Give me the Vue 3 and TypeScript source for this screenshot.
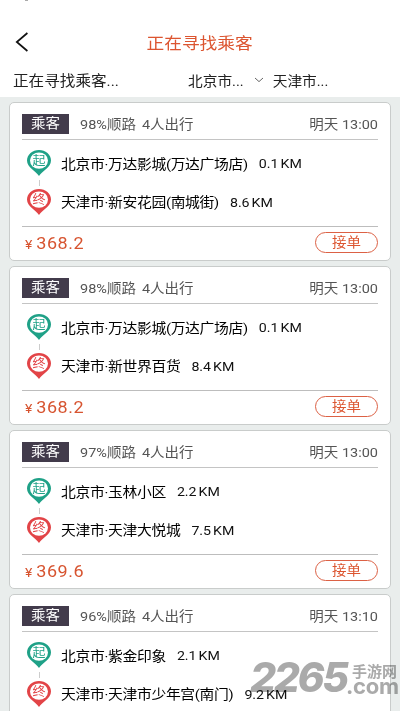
<script setup lang="ts">
interface Stop {
  name: string
  distance: string
}
interface Ride {
  match: string
  people: string
  time: string
  from: Stop
  to: Stop
  price: string
}

const rides: Ride[] = [
  {
    match: '98%顺路', people: '4人出行', time: '13:00', price: '368.2',
    from: { name: '北京市·万达影城(万达广场店)', distance: '0.1' },
    to: { name: '天津市·新安花园(南城街)', distance: '8.6' },
  },
  {
    match: '98%顺路', people: '4人出行', time: '13:00', price: '368.2',
    from: { name: '北京市·万达影城(万达广场店)', distance: '0.1' },
    to: { name: '天津市·新世界百货', distance: '8.4' },
  },
  {
    match: '97%顺路', people: '4人出行', time: '13:00', price: '369.6',
    from: { name: '北京市·玉林小区', distance: '2.2' },
    to: { name: '天津市·天津大悦城', distance: '7.5' },
  },
  {
    match: '96%顺路', people: '4人出行', time: '13:10', price: '369.6',
    from: { name: '北京市·紫金印象', distance: '2.1' },
    to: { name: '天津市·天津市少年宫(南门)', distance: '9.2' },
  },
]
</script>

<template>
  <div class="screen">
    <span class="notch"></span>
    <header class="nav">
      <svg class="back" width="14" height="20" viewBox="0 0 14 20">
        <path d="M12.4 1 L1.8 10 L12.4 19" fill="none" stroke="#111" stroke-width="1.7" />
      </svg>
      <h1 class="title flat">正在寻找乘客</h1>
    </header>
    <div class="filter">
      <span class="status flat">正在寻找乘客...</span>
      <span class="city flat">北京市...</span>
      <svg class="chev" width="10" height="6" viewBox="0 0 10 6">
        <path d="M1 1 L5 4.6 L9 1" fill="none" stroke="#555" stroke-width="0.9" />
      </svg>
      <span class="city flat">天津市...</span>
    </div>
    <main class="list">
      <article v-for="(r, i) in rides" :key="i" class="card">
        <div class="head">
          <span class="badge"><span class="flat">乘客</span></span>
          <span class="match flat">{{ r.match }}</span>
          <span class="people flat">{{ r.people }}</span>
          <span class="time flat">明天 {{ r.time }}</span>
        </div>
        <div class="route">
          <div class="pins">
            <span class="pin">
              <svg width="24" height="26" viewBox="0 0 24 26">
                <path d="M12 26 C9 21.5 0 17.5 0 10.6 A12 10.6 0 0 1 24 10.6 C24 17.5 15 21.5 12 26Z" fill="#1fa187" />
                <ellipse cx="12" cy="10.6" rx="9" ry="8.2" fill="#fff" />
              </svg>
              <span class="mark start">起</span>
            </span>
            <span class="link"></span>
            <span class="pin">
              <svg width="24" height="26" viewBox="0 0 24 26">
                <path d="M12 26 C9 21.5 0 17.5 0 10.6 A12 10.6 0 0 1 24 10.6 C24 17.5 15 21.5 12 26Z" fill="#e24447" />
                <ellipse cx="12" cy="10.6" rx="9" ry="8.2" fill="#fff" />
              </svg>
              <span class="mark end">终</span>
            </span>
          </div>
          <div class="stops">
            <div class="stop"><span class="place flat">{{ r.from.name }}</span><span class="dist flat">{{ r.from.distance }}<i>KM</i></span></div>
            <div class="stop"><span class="place flat">{{ r.to.name }}</span><span class="dist flat">{{ r.to.distance }}<i>KM</i></span></div>
          </div>
        </div>
        <div class="foot">
          <span class="price flat"><small>¥</small>{{ r.price }}</span>
          <button class="accept"><span class="flat">接单</span></button>
        </div>
      </article>
    </main>
    <div class="watermark">
      <span class="wm-num">2265</span>
      <span class="wm-side"><span class="wm-cn">手游网</span><span class="wm-com">.com</span></span>
    </div>
  </div>
</template>

<style>
body { margin: 0; overflow: hidden; }
</style>

<style scoped>
.screen {
  position: relative;
  width: 400px;
  height: 711px;
  overflow: hidden;
  background: #fff;
  font-family: Roboto, "Noto Sans CJK SC", sans-serif;
  color: #111;
  white-space: nowrap;
}
.flat { display: inline-block; transform: scaleY(0.92); }
.notch {
  position: absolute;
  left: 25px;
  top: 0;
  width: 3px;
  height: 1px;
  background: #aaa;
}
.nav {
  box-sizing: border-box;
  height: 66px;
  padding: 18px 0 0 15px;
  display: flex;
  align-items: center;
}
.title {
  margin: 1px 0 0 117.5px;
  font-size: 17.7px;
  line-height: 24px;
  font-weight: 400;
  color: #dc5530;
}
.filter {
  box-sizing: border-box;
  height: 31px;
  padding: 0 0 1px 13px;
  display: flex;
  align-items: center;
  font-size: 15.6px;
  line-height: 20px;
  color: #222;
}
.status { width: 175px; }
.city { font-size: 14.7px; }
.chev { margin: 0 9px 3px 10px; }
.list {
  height: 614px;
  box-sizing: border-box;
  padding: 5px 9px 0;
  background: #e9edec;
  display: flex;
  flex-direction: column;
  gap: 5px;
  overflow: hidden;
}
.card {
  box-sizing: border-box;
  flex: 0 0 159px;
  padding: 0 12px;
  background: #fff;
  border: 1px solid #c9cccb;
  border-radius: 5px;
}
.head {
  box-sizing: border-box;
  height: 37px;
  padding-top: 6px;
  border-bottom: 1px solid #c4c4c4;
  display: flex;
  align-items: center;
  font-size: 14.5px;
  color: #555;
}
.match, .people, .time { margin-bottom: 1px; }
.badge {
  width: 47px;
  height: 20px;
  margin-right: 11px;
  background: #423b4b;
  color: #fff;
  display: flex;
  align-items: center;
  justify-content: center;
  line-height: 20px;
}
.people { margin-left: 6px; }
.time { margin-left: auto; }
.route {
  box-sizing: border-box;
  height: 86px;
  display: flex;
  padding-left: 5px;
}
.pins {
  width: 24px;
  padding-top: 10px;
  display: flex;
  flex-direction: column;
  align-items: center;
}
.pin { position: relative; width: 24px; height: 26px; }
.pin svg { display: block; }
.mark {
  position: absolute;
  left: 0;
  top: 3px;
  width: 24px;
  text-align: center;
  font-size: 13px;
  line-height: 15px;
  transform: scaleY(0.92);
}
.start { color: #1fa187; }
.end { color: #e24447; }
.link { width: 1px; height: 6px; margin: 4px 0 3px; background: #ccc; }
.stops { padding: 4px 0 0 10px; }
.stop {
  height: 38.5px;
  display: flex;
  align-items: center;
  font-size: 14.8px;
  color: #000;
}
.place { letter-spacing: -0.32px; }
.dist { margin-left: 11px; font-size: 14.2px; color: #111; }
.dist i { font-style: normal; margin-left: 2px; }
.foot {
  border-top: 1px solid #bdbdbd;
  height: 32px;
  display: flex;
  align-items: center;
  justify-content: space-between;
}
.price {
  padding-left: 3px;
  font-size: 18px;
  letter-spacing: 0.5px;
  color: #d75430;
}
.price small { font-size: 14px; margin-right: 3.5px; }
.accept {
  box-sizing: border-box;
  width: 63px;
  height: 21px;
  margin: 0 0 1px;
  padding: 0;
  border: 1px solid #dc6145;
  border-radius: 11px;
  background: #fff;
  color: #dc5530;
  font: 14.5px/19px Roboto, "Noto Sans CJK SC", sans-serif;
}
.watermark {
  position: absolute;
  left: 250px;
  top: 660px;
  width: 150px;
  height: 40px;
  display: flex;
  color: #aaa;
  mix-blend-mode: multiply;
}
.wm-num {
  width: 96px;
  font: italic 800 41px/35px Inter, sans-serif;
  letter-spacing: -2.4px;
}
.wm-side { display: flex; flex-direction: column; }
.wm-cn {
  padding-left: 6px;
  font: 700 15px/17px "Noto Sans CJK SC", sans-serif;
  margin-top: 2px;
}
.wm-com {
  font: 700 22px/16px Inter, sans-serif;
  letter-spacing: -0.3px;
  margin-top: -1px;
}
</style>
